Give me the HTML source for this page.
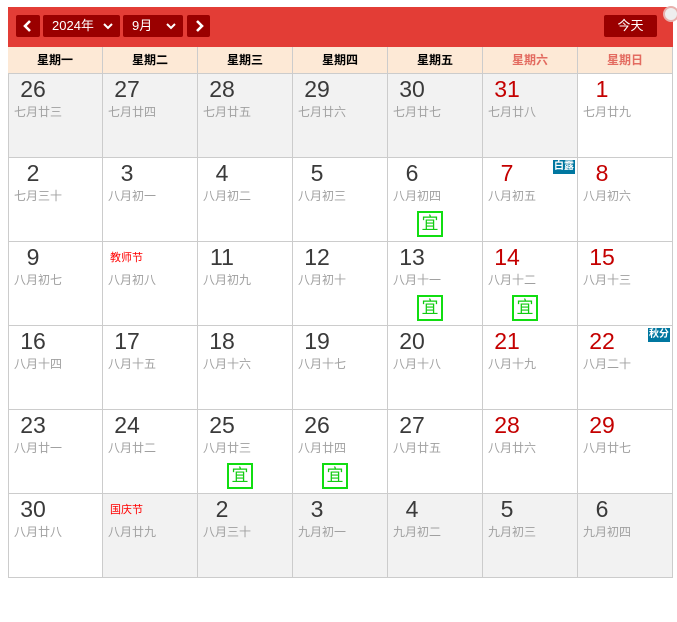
<!DOCTYPE html>
<html><head><meta charset="utf-8">
<style>
*{margin:0;padding:0;box-sizing:border-box}
body{width:677px;height:622px;background:#fff;position:relative;overflow:hidden;font-family:"Liberation Sans","Noto Sans CJK SC",sans-serif}
.hd{position:absolute;left:8px;top:7px;width:665px;height:40px;background:#e33d36}
.b{position:absolute;top:8px;height:22px;background:#9a0000;border-radius:2px;color:#fff;font-size:13px;line-height:22px}
.b svg{position:absolute}
.wk{position:absolute;left:8px;top:47px;width:665px;height:27px;background:#fde9d6;display:flex;border-bottom:1px solid #ccc}
.wk div{width:95px;text-align:center;font-size:12px;font-weight:bold;line-height:27px;border-right:1px solid #ccc}
.wk div.r{color:#e36b60}
.g{position:absolute;left:8px;top:74px;width:665px;display:grid;grid-template-columns:repeat(7,95px);grid-auto-rows:84px}
.c{position:relative;border-right:1px solid #ccc;border-bottom:1px solid #ccc;background:#fff}
.c.x{background:#f2f2f2}
.c:nth-child(7n+1){border-left:1px solid #ccc}
.n{position:absolute;left:6px;top:2px;width:36px;text-align:center;font-size:23px;color:#3a3a3a}
.n.r{color:#c40000}
.l{position:absolute;left:5px;top:29px;font-size:12px;color:#a0a0a0}
.f{position:absolute;left:7px;top:7px;font-size:11px;color:#f00}
.y{position:absolute;left:29px;top:53px;width:26px;height:26px;border:2px solid #11dd11;color:#11cc11;font-size:17px;line-height:22px;text-align:center}
.t{position:absolute;right:2px;top:2px;background:#0077a0;color:#fff;font-size:10px;font-weight:bold;padding:0 1px;line-height:14px}
</style></head><body>
<div class="hd">
<div class="b" style="left:8px;width:24px"><svg style="left:7px;top:5px" width="10" height="12" viewBox="0 0 10 12"><path d="M7 1L2 6l5 5" fill="none" stroke="#fff" stroke-width="2.6"/></svg></div>
<div class="b" style="left:35px;width:77px;padding-left:9px">2024年<svg style="right:7px;top:8px" width="10" height="7" viewBox="0 0 10 7"><path d="M1 1l4 4 4-4" fill="none" stroke="#fff" stroke-width="2"/></svg></div>
<div class="b" style="left:115px;width:60px;padding-left:9px">9月<svg style="right:7px;top:8px" width="10" height="7" viewBox="0 0 10 7"><path d="M1 1l4 4 4-4" fill="none" stroke="#fff" stroke-width="2"/></svg></div>
<div class="b" style="left:179px;width:23px"><svg style="left:7px;top:5px" width="10" height="12" viewBox="0 0 10 12"><path d="M3 1l5 5-5 5" fill="none" stroke="#fff" stroke-width="2.6"/></svg></div>
<div class="b" style="left:596px;width:53px;text-align:center">今天</div>
</div>
<div style="position:absolute;left:663px;top:6px;width:16px;height:16px;border-radius:50%;background:#eee;border:2px solid #e8b0ad"></div>
<div class="wk"><div>星期一</div><div>星期二</div><div>星期三</div><div>星期四</div><div>星期五</div><div class="r">星期六</div><div class="r">星期日</div></div>
<div class="g">
<div class="c x"><div class="n">26</div><div class="l">七月廿三</div></div>
<div class="c x"><div class="n">27</div><div class="l">七月廿四</div></div>
<div class="c x"><div class="n">28</div><div class="l">七月廿五</div></div>
<div class="c x"><div class="n">29</div><div class="l">七月廿六</div></div>
<div class="c x"><div class="n">30</div><div class="l">七月廿七</div></div>
<div class="c x"><div class="n r">31</div><div class="l">七月廿八</div></div>
<div class="c"><div class="n r">1</div><div class="l">七月廿九</div></div>

<div class="c"><div class="n">2</div><div class="l">七月三十</div></div>
<div class="c"><div class="n">3</div><div class="l">八月初一</div></div>
<div class="c"><div class="n">4</div><div class="l">八月初二</div></div>
<div class="c"><div class="n">5</div><div class="l">八月初三</div></div>
<div class="c"><div class="n">6</div><div class="l">八月初四</div><div class="y">宜</div></div>
<div class="c"><div class="n r">7</div><div class="l">八月初五</div><div class="t">白露</div></div>
<div class="c"><div class="n r">8</div><div class="l">八月初六</div></div>

<div class="c"><div class="n">9</div><div class="l">八月初七</div></div>
<div class="c"><div class="f">教师节</div><div class="l">八月初八</div></div>
<div class="c"><div class="n">11</div><div class="l">八月初九</div></div>
<div class="c"><div class="n">12</div><div class="l">八月初十</div></div>
<div class="c"><div class="n">13</div><div class="l">八月十一</div><div class="y">宜</div></div>
<div class="c"><div class="n r">14</div><div class="l">八月十二</div><div class="y">宜</div></div>
<div class="c"><div class="n r">15</div><div class="l">八月十三</div></div>

<div class="c"><div class="n">16</div><div class="l">八月十四</div></div>
<div class="c"><div class="n">17</div><div class="l">八月十五</div></div>
<div class="c"><div class="n">18</div><div class="l">八月十六</div></div>
<div class="c"><div class="n">19</div><div class="l">八月十七</div></div>
<div class="c"><div class="n">20</div><div class="l">八月十八</div></div>
<div class="c"><div class="n r">21</div><div class="l">八月十九</div></div>
<div class="c"><div class="n r">22</div><div class="l">八月二十</div><div class="t">秋分</div></div>

<div class="c"><div class="n">23</div><div class="l">八月廿一</div></div>
<div class="c"><div class="n">24</div><div class="l">八月廿二</div></div>
<div class="c"><div class="n">25</div><div class="l">八月廿三</div><div class="y">宜</div></div>
<div class="c"><div class="n">26</div><div class="l">八月廿四</div><div class="y">宜</div></div>
<div class="c"><div class="n">27</div><div class="l">八月廿五</div></div>
<div class="c"><div class="n r">28</div><div class="l">八月廿六</div></div>
<div class="c"><div class="n r">29</div><div class="l">八月廿七</div></div>

<div class="c"><div class="n">30</div><div class="l">八月廿八</div></div>
<div class="c x"><div class="f">国庆节</div><div class="l">八月廿九</div></div>
<div class="c x"><div class="n">2</div><div class="l">八月三十</div></div>
<div class="c x"><div class="n">3</div><div class="l">九月初一</div></div>
<div class="c x"><div class="n">4</div><div class="l">九月初二</div></div>
<div class="c x"><div class="n">5</div><div class="l">九月初三</div></div>
<div class="c x"><div class="n">6</div><div class="l">九月初四</div></div>
</div>
</body></html>
